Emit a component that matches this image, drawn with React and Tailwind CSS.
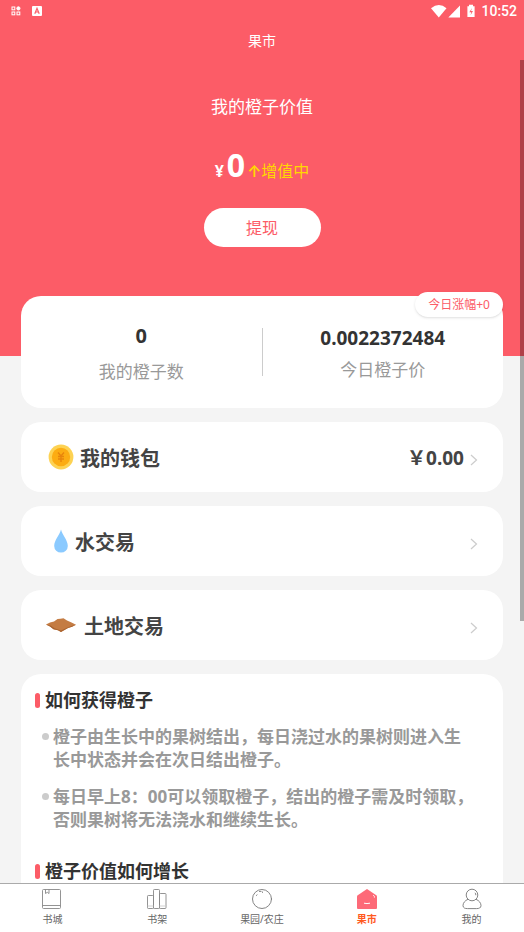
const rows = [
  { label: "我的钱包", amount: "￥0.00", icon: CoinIcon, spacing: "pl-[27px] gap-[6px]" },
  { label: "水交易", icon: DropIcon, spacing: "pl-[32px] gap-[6px]" },
  { label: "土地交易", icon: LandIcon, spacing: "pl-[24px] gap-[7px]" },
];

const tabs = [
  { label: "书城", icon: BookIcon },
  { label: "书架", icon: ShelfIcon },
  { label: "果园/农庄", icon: FruitIcon },
  { label: "果市", icon: MarketIcon, active: true },
  { label: "我的", icon: PersonIcon },
];

function CoinIcon() {
  return (
    <svg width="26" height="26" viewBox="0 0 26 26" aria-hidden="true">
      <circle cx="13" cy="13" r="12.4" fill="#fdd253" />
      <circle cx="13" cy="13" r="9.2" fill="#fcac12" />
      <path d="M10 8.500 13 12l3-3.500M13 12v6M10 12.500h6M10 15h6" fill="none" stroke="#e8850c" strokeWidth="1.400" />
    </svg>
  );
}

function DropIcon() {
  return (
    <svg width="16" height="24" viewBox="0 0 16 24" aria-hidden="true">
      <path d="M8 .5C9.2 5.5 14.8 11.300 14.800 17A6.800 6.600 0 0 1 1.200 17C1.200 11.300 6.800 5.500 8 .5Z" fill="#8bcaff" />
    </svg>
  );
}

function LandIcon() {
  return (
    <svg width="32" height="16" viewBox="0 0 32 16" aria-hidden="true">
      <path d="M1 7.600 5 5.600 9 4.600 12.500 2 15.500 1.800 18.500 1.200 22 3.600 26.500 5.400 31 7.800 27 9.800 23 11 19 13.200 16 15 13 13.200 8.500 12.200 5 9.400Z" fill="#c47c43" />
      <path d="M1 7.600 5 9.400 8.500 12.200 13 13.200 16 15 19 13.200 23 11 27 9.800 31 7.800 27 8.800 22.500 10.400 16 13.600 9.500 11.200 5.500 8.600Z" fill="#a9632f" />
    </svg>
  );
}

function BookIcon() {
  return (
    <svg width="22" height="22" viewBox="0 0 22 22" fill="none" stroke="#888" strokeWidth="0.900" aria-hidden="true">
      <rect x="1.500" y="1.500" width="18" height="19" rx="1" />
      <path d="M1.500 17.500h18M4.500 1.500v4l1.800-1.200L8 5.500v-4" />
    </svg>
  );
}

function ShelfIcon() {
  return (
    <svg width="22" height="22" viewBox="0 0 22 22" fill="none" stroke="#888" strokeWidth="0.900" aria-hidden="true">
      <rect x="1.500" y="7.500" width="6" height="13" rx="0.800" />
      <rect x="7.500" y="1.500" width="6" height="19" rx="0.800" />
      <rect x="13.500" y="5.500" width="6.500" height="15" rx="0.800" />
      <path d="M1.500 18h6M13.500 18H20" stroke="#ccc" />
    </svg>
  );
}

function FruitIcon() {
  return (
    <svg width="22" height="22" viewBox="0 0 22 22" fill="none" stroke="#777" strokeWidth="0.900" strokeLinecap="round" aria-hidden="true">
      <circle cx="11" cy="11" r="9.500" />
      <path d="M8.500 3.500h1M11.500 4.500l-.5-1M5.500 7.500 6 6.800" />
    </svg>
  );
}

function MarketIcon() {
  return (
    <svg width="22" height="22" viewBox="0 0 22 22" aria-hidden="true">
      <path d="M11 1 1.700 7.300Q1 7.800 1 8.600V20q0 1 1 1h18q1 0 1-1V8.600q0-.8-.7-1.300Z" fill="#fd6a78" />
      <path d="M8 15.200q3 .8 6 0" fill="none" stroke="#fff" strokeWidth="1" />
      <path d="M17 7.200l1.400 1v1.500" fill="none" stroke="#fff" strokeWidth="0.800" />
    </svg>
  );
}

function PersonIcon() {
  return (
    <svg width="22" height="22" viewBox="0 0 22 22" fill="none" stroke="#777" strokeWidth="0.900" aria-hidden="true">
      <circle cx="11" cy="7" r="5.800" />
      <path d="M7 11.300C4 12.500 2 15 2 17.500 2 20 4 20.600 6.500 20.600h9c2.500 0 4.500-.6 4.500-3.100 0-2.500-2-5-5-6.200" />
      <path d="M14 4.800q1 1 .8 2.400" />
    </svg>
  );
}

function Chevron() {
  return (
    <svg className="mt-[3px]" width="8" height="12" viewBox="0 0 8 12" fill="none" stroke="#ccc" strokeWidth="1.200" aria-hidden="true">
      <path d="M1 1l5.500 5L1 11" />
    </svg>
  );
}

function StatusBar() {
  return (
    <div className="flex h-[22px] items-center justify-between pl-[11px] pr-[7px]">
      <div className="flex items-center gap-[11px]">
        <svg width="10" height="10" viewBox="0 0 10 10" fill="none" stroke="#fff" strokeWidth="1" aria-hidden="true">
          <rect x="1" y="1" width="2.800" height="2.800" />
          <rect x="1" y="6" width="2.800" height="2.800" />
          <rect x="6" y="6" width="2.800" height="2.800" />
          <circle cx="7.400" cy="2.400" r="1.600" fill="#fff" />
        </svg>
        <svg width="10" height="10" viewBox="0 0 10 10" aria-hidden="true">
          <rect width="10" height="10" rx="1" fill="#fff" />
          <path d="M2.800 7.800 5 2.300l2.200 5.500M3.700 6h2.600" fill="none" stroke="#fc5c67" strokeWidth="1.200" />
        </svg>
      </div>
      <div className="flex items-center">
        <svg width="47" height="14" viewBox="0 0 47 14" fill="#fff" aria-hidden="true">
          <path d="M0 4.200Q8-2 15.500 4.200L7.800 13.500Z" />
          <path d="M29 1.500V13.500H17.300Z" />
          <path d="M38 .8h4v1.400h1.600V13H36.400V2.200H38Z" />
          <path d="M41 4 38.300 8.300h2l-.8 3L42 7h-2Z" fill="#fc5c67" />
        </svg>
        <span className="pl-[3px] font-[Roboto,sans-serif] text-sm font-medium leading-5">10:52</span>
      </div>
    </div>
  );
}

function SectionTitle({ children }) {
  return (
    <h2 className="flex items-center gap-[5px] text-lg font-bold leading-6 text-[#333]">
      <span className="h-[15px] w-[5px] rounded-full bg-[#fc5c67]" />
      {children}
    </h2>
  );
}

function Bullet({ children }) {
  return (
    <li className="flex gap-[4px]">
      <span className="mt-[8px] h-[7px] w-[7px] shrink-0 rounded-full bg-[#ccc]" />
      <p>{children}</p>
    </li>
  );
}

export default function App() {
  return (
    <div className="relative flex h-screen flex-col overflow-hidden bg-[#f4f4f4] font-['Noto_Sans','Noto_Sans_CJK_SC',sans-serif]">
      <header className="h-[60px] shrink-0 bg-[#fc5c67] text-white">
        <StatusBar />
        <h1 className="pt-[9px] text-center text-sm leading-5">果市</h1>
      </header>

      <main className="min-h-0 flex-1 overflow-y-auto [scrollbar-width:none]">
        <section className="flex flex-col items-center bg-[#fc5c67] pb-[109px] pt-[35px] text-white">
          <p className="text-[17px] leading-6">我的橙子价值</p>
          <p className="mt-[26px] flex items-baseline leading-10">
            <span className="text-base font-bold">¥</span>
            <span className="pl-[3px] text-[32px] font-bold">0</span>
            <span className="pl-[2px] font-['Inter','Noto_Sans_CJK_SC',sans-serif] text-base text-[#ffd800]">
              <span className="font-semibold">↑</span>增值中
            </span>
          </p>
          <button className="mt-[23px] h-[39px] w-[117px] rounded-full bg-white text-base text-[#fc5c67]">提现</button>
        </section>

        <div className="mx-[21px] -mt-[60px] flex flex-col gap-[14px]">
          <section className="relative flex h-[112px] items-center rounded-[20px] bg-white text-center">
            <div className="flex-1 pt-[3px]">
              <p className="text-xl font-bold leading-8 text-[#333]">0</p>
              <p className="pt-[4px] text-[17px] leading-8 text-[#999]">我的橙子数</p>
            </div>
            <div className="h-[48px] w-px bg-[#ccc]" />
            <div className="flex-1 pt-[3px]">
              <p className="text-[19px] font-bold leading-8 text-[#333]">0.0022372484</p>
              <p className="text-[17px] leading-8 text-[#999]">今日橙子价</p>
            </div>
            <span className="absolute -top-[4px] right-0 flex h-[25px] w-[88px] items-center justify-center rounded-full bg-white text-xs text-[#fc5c67] shadow">
              今日涨幅+0
            </span>
          </section>

          {rows.map(({ label, amount, icon: Icon, spacing }) => (
            <button key={label} className={`flex h-[70px] items-center rounded-[20px] bg-white pr-[25px] text-[#444] ${spacing}`}>
              <Icon />
              <span className="pt-[3px] text-xl font-bold">{label}</span>
              <span className="ml-auto flex items-center gap-[6px] pt-[3px] text-[19px] font-bold">
                {amount}
                <Chevron />
              </span>
            </button>
          ))}

          <section className="rounded-t-[20px] bg-white pb-6 pl-[14px] pr-[26px] pt-[14px]">
            <SectionTitle>如何获得橙子</SectionTitle>
            <ul className="mb-[28px] mt-[13px] flex flex-col gap-[14px] pl-[7px] text-[17px] font-bold leading-[23px] text-[#999]">
              <Bullet>橙子由生长中的果树结出，每日浇过水的果树则进入生长中状态并会在次日结出橙子。</Bullet>
              <Bullet>每日早上8：00可以领取橙子，结出的橙子需及时领取，否则果树将无法浇水和继续生长。</Bullet>
            </ul>
            <SectionTitle>橙子价值如何增长</SectionTitle>
          </section>
        </div>
      </main>

      <nav className="flex h-[49px] shrink-0 border-t border-[#aaa] bg-white">
        {tabs.map(({ label, icon: Icon, active }) => (
          <a key={label} href="#" className={`flex flex-1 flex-col items-center pt-[4px] text-[10px] leading-[18px] ${active ? "font-bold text-[#ff5a1f]" : "text-[#666]"}`}>
            <Icon />
            {label}
          </a>
        ))}
      </nav>

      <div className="absolute right-0 top-[60px] h-[561px] w-[4px] bg-black/30" />
    </div>
  );
}
